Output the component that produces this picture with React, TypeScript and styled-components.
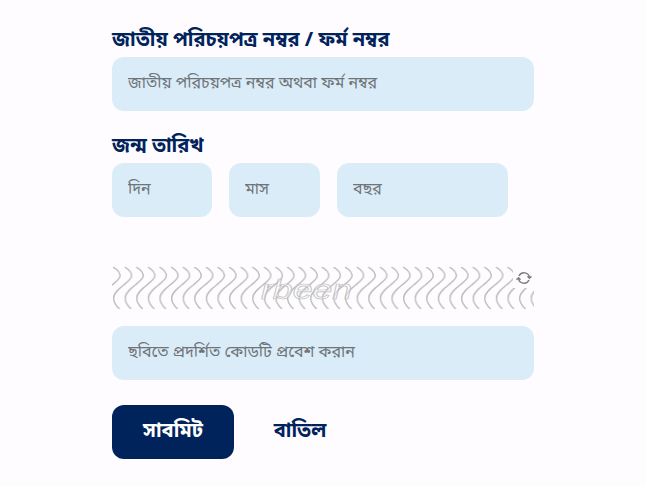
import styled, { createGlobalStyle } from "styled-components";

const GlobalStyle = createGlobalStyle`
    html, body {
        margin: 0;
        padding: 0;
        background: #fefcff;
    }
    body {
        font-family: "Noto Sans Bengali", "Noto Sans", "Liberation Sans", sans-serif;
    }
`

const wave = "M0 0 C3.5 2 7 5 7 9 C7 15 -11 22 -11 31 C-11 35 -8.5 39 -5 42"

const App = () => {
    return (
        <Page>
            <GlobalStyle/>
            <Form>
                <Label>জাতীয় পরিচয়পত্র নম্বর / ফর্ম নম্বর</Label>
                <Field placeholder="জাতীয় পরিচয়পত্র নম্বর অথবা ফর্ম নম্বর"/>
                <DateLabel>জন্ম তারিখ</DateLabel>
                <DateRow>
                    <Field width="100px" placeholder="দিন"/>
                    <Field width="91px" placeholder="মাস"/>
                    <Field width="171px" placeholder="বছর"/>
                </DateRow>
                <Captcha>
                    <svg width="422" height="42" viewBox="0 0 422 42">
                        <defs>
                            <pattern id="waves" x="1" width="11.6" height="42" patternUnits="userSpaceOnUse">
                                <g fill="none" stroke="#bcbcbc" strokeWidth="1.4">
                                    <path d={wave}/>
                                    <path transform="translate(11.6 0)" d={wave}/>
                                </g>
                            </pattern>
                        </defs>
                        <rect width="422" height="42" fill="url(#waves)"/>
                        <CaptchaText x="149" y="32" textLength="91" lengthAdjust="spacingAndGlyphs">rbeen</CaptchaText>
                    </svg>
                    <Refresh>
                        <svg width="16" height="16" viewBox="0 0 16 16" fill="none" stroke="currentColor" strokeWidth="1.5">
                            <path d="M3 6 A5.5 5.5 0 0 1 13.5 8"/>
                            <path d="M11.5 6.2 L13.5 8.2 L15.5 6.2"/>
                            <path d="M13 10 A5.5 5.5 0 0 1 2.5 8"/>
                            <path d="M0.5 9.8 L2.5 7.8 L4.5 9.8"/>
                        </svg>
                    </Refresh>
                </Captcha>
                <Field placeholder="ছবিতে প্রদর্শিত কোডটি প্রবেশ করান"/>
                <Actions>
                    <Submit>সাবমিট</Submit>
                    <Cancel>বাতিল</Cancel>
                </Actions>
            </Form>
        </Page>
    );
};

export default App;

const Page = styled.div`
    width: 646px;
    height: 486px;
    overflow: hidden;
`
const Form = styled.form`
    width: 422px;
    margin-left: 112px;
    padding-top: 25px;
    display: flex;
    flex-direction: column;
`
const Label = styled.div`
    height: 32px;
    line-height: 33px;
    font-size: 20px;
    font-weight: 700;
    color: #00235c;
`
const DateLabel = styled(Label)`
    margin-top: 20px;
`
type fieldProps = {
    width?: string
}
const Field = styled.input<fieldProps>`
    box-sizing: border-box;
    width: ${props => props.width || "100%"};
    height: 54px;
    padding: 0 16px;
    border: none;
    border-radius: 12px;
    background: #daecf8;
    font-family: inherit;
    font-size: 16px;
    outline: none;

    &::placeholder {
        color: #6f7478;
        opacity: 1;
    }
`
const DateRow = styled.div`
    display: flex;
    gap: 17px;
`
const Captcha = styled.div`
    position: relative;
    height: 42px;
    margin: 50px 0 17px;

    svg {
        display: block;
    }
`
const CaptchaText = styled.text`
    font-family: "Liberation Sans", sans-serif;
    font-size: 27px;
    font-style: italic;
    fill: rgba(254, 252, 255, 0.45);
    stroke: #bcbcbc;
    stroke-width: 0.7;
`
const Refresh = styled.div`
    position: absolute;
    top: 0;
    right: 0;
    width: 21px;
    height: 21px;
    background: #fefcff;
    color: #7d7d7d;
    display: flex;
    align-items: center;
    justify-content: center;
`
const Actions = styled.div`
    display: flex;
    align-items: center;
    margin-top: 25px;
`
const Submit = styled.button`
    width: 122px;
    height: 54px;
    border: none;
    border-radius: 12px;
    background: #00235c;
    color: #ffffff;
    font-family: inherit;
    font-size: 20px;
    font-weight: 700;
`
const Cancel = styled.button`
    width: 132px;
    height: 54px;
    border: none;
    background: transparent;
    color: #00235c;
    font-family: inherit;
    font-size: 20px;
    font-weight: 700;
`
